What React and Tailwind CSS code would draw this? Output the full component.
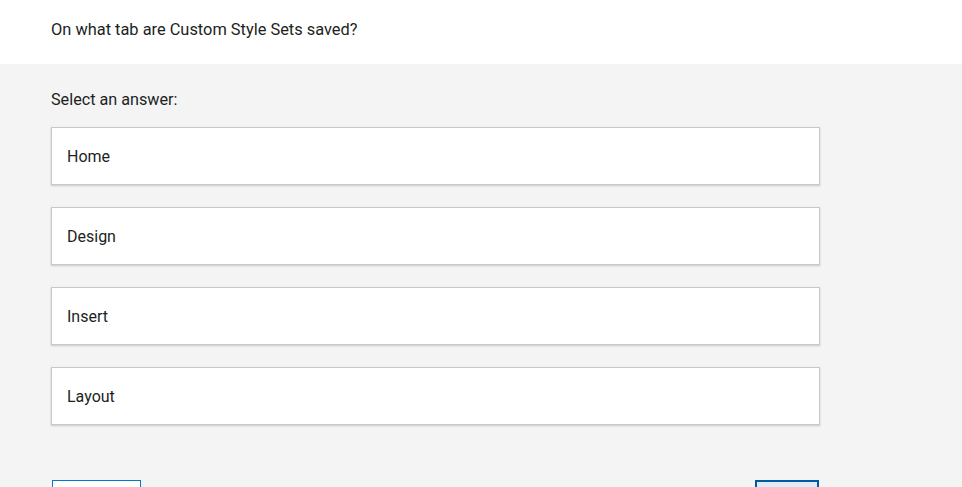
export default function App() {
  const options = ["Home", "Design", "Insert", "Layout"];
  return (
    <div className="min-h-screen bg-[#f4f4f4] text-[#201f1e]" style={{ fontFamily: "Roboto, 'Liberation Sans', sans-serif" }}>
      <div className="h-16 bg-white flex items-center px-[51px] pb-[4px] text-[16.4px]">
        On what tab are Custom Style Sets saved?
      </div>
      <div className="px-[51px] pt-6">
        <div className="text-[16.2px] leading-6 mb-[15px]">Select an answer:</div>
        <div className="w-[769px] flex flex-col gap-[22px]">
          {options.map((o) => (
            <div
              key={o}
              className="h-[58px] bg-white border border-[#c8c8c8] shadow-[0_1px_2px_rgba(0,0,0,0.18)] flex items-center px-[15px] pt-px text-[16px]"
            >
              {o}
            </div>
          ))}
        </div>
        <div className="w-[769px] flex justify-between mt-[55px]">
          <button aria-label="Previous" className="w-[89px] h-10 ml-px bg-white border border-[#0078d4]"></button>
          <button aria-label="Next" className="w-[64px] h-10 mr-px bg-[#deecf9] border-2 border-[#005a9e]"></button>
        </div>
      </div>
    </div>
  );
}
